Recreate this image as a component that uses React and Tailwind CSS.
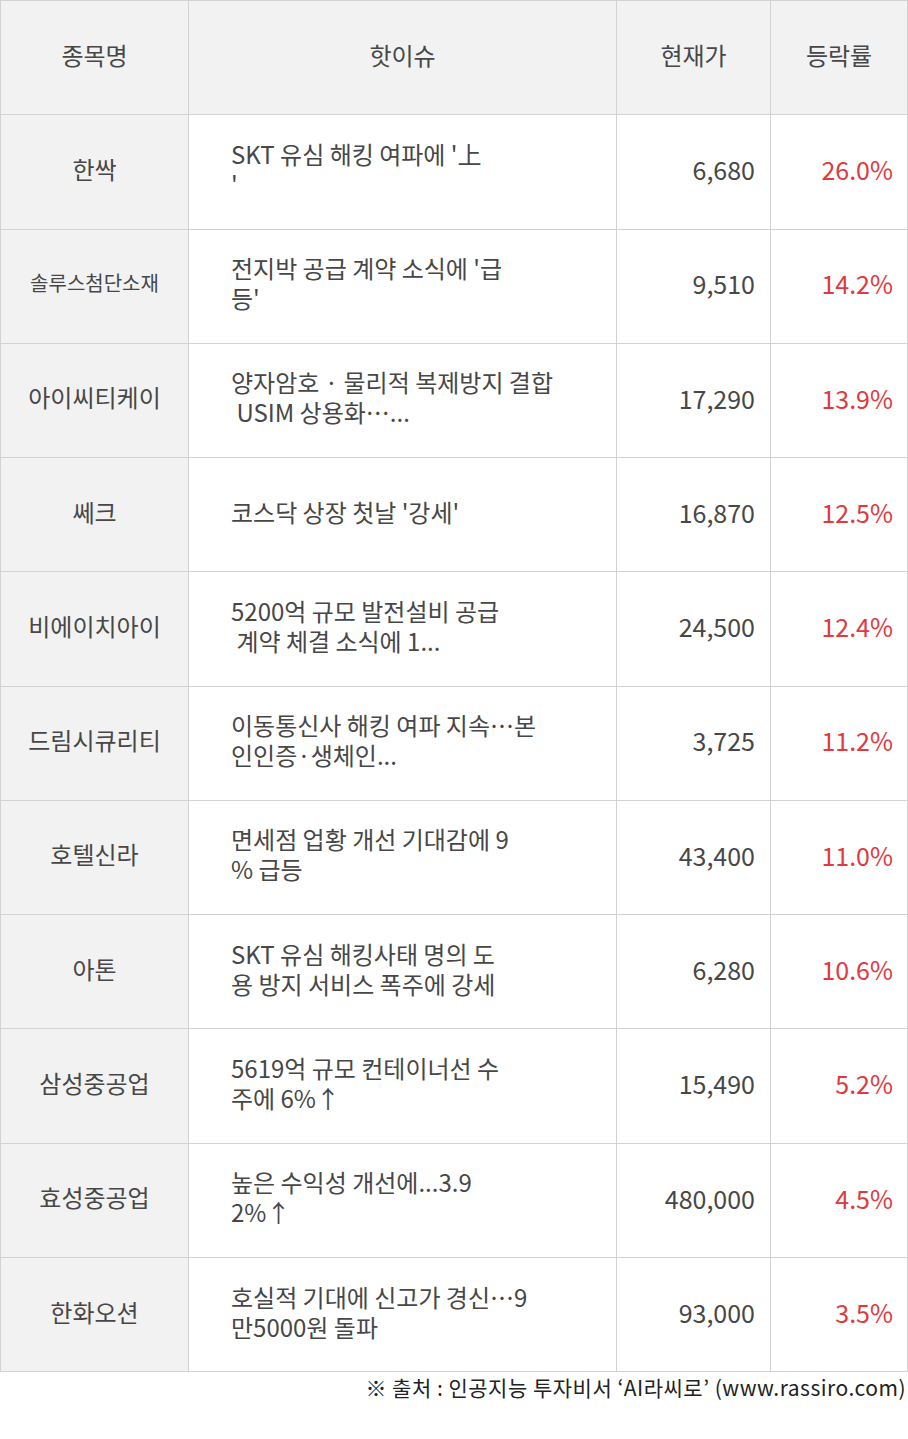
const rows = [
  { name: "한싹", issue: ["SKT 유심 해킹 여파에 '上", "'"], price: "6,680", rate: "26.0%" },
  { name: "솔루스첨단소재", small: true, issue: ["전지박 공급 계약 소식에 '급", "등'"], price: "9,510", rate: "14.2%" },
  { name: "아이씨티케이", issue: ["양자암호 · 물리적 복제방지 결합", " USIM 상용화⋯..."], price: "17,290", rate: "13.9%" },
  { name: "쎄크", issue: ["코스닥 상장 첫날 '강세'"], price: "16,870", rate: "12.5%" },
  { name: "비에이치아이", issue: ["5200억 규모 발전설비 공급", " 계약 체결 소식에 1..."], price: "24,500", rate: "12.4%" },
  { name: "드림시큐리티", issue: ["이동통신사 해킹 여파 지속⋯본", "인인증·생체인..."], price: "3,725", rate: "11.2%" },
  { name: "호텔신라", issue: ["면세점 업황 개선 기대감에 9", "% 급등"], price: "43,400", rate: "11.0%" },
  { name: "아톤", issue: ["SKT 유심 해킹사태 명의 도", "용 방지 서비스 폭주에 강세"], price: "6,280", rate: "10.6%" },
  { name: "삼성중공업", issue: ["5619억 규모 컨테이너선 수", "주에 6%↑"], price: "15,490", rate: "5.2%" },
  { name: "효성중공업", issue: ["높은 수익성 개선에...3.9", "2%↑"], price: "480,000", rate: "4.5%" },
  { name: "한화오션", issue: ["호실적 기대에 신고가 경신⋯9", "만5000원 돌파"], price: "93,000", rate: "3.5%" },
];

const font = { fontFamily: '"Noto Sans CJK KR", "Noto Sans", sans-serif' };

function Row({ children }) {
  return <div className="flex h-[114.27px] border-b border-[#d2d2d2]">{children}</div>;
}

export default function App() {
  return (
    <div className="w-[908px] bg-white text-[#474747]" style={font}>
      <div className="border-l border-t border-[#d2d2d2]">
        <Row>
          <div className="flex w-[188px] items-center justify-center border-r border-[#d2d2d2] bg-[#f2f2f2] pb-[6px] text-[24px]">종목명</div>
          <div className="flex w-[428px] items-center justify-center border-r border-[#d2d2d2] bg-[#f2f2f2] pb-[6px] text-[24px]">핫이슈</div>
          <div className="flex w-[154px] items-center justify-center border-r border-[#d2d2d2] bg-[#f2f2f2] pb-[6px] text-[24px]">현재가</div>
          <div className="flex w-[137px] items-center justify-center border-r border-[#d2d2d2] bg-[#f2f2f2] pb-[6px] text-[24px]">등락률</div>
        </Row>
        {rows.map((r) => (
          <Row key={r.name}>
            <div
              className={`flex w-[188px] items-center justify-center border-r border-[#d2d2d2] bg-[#f2f2f2] pb-[6px] ${
                r.small ? "text-[20px]" : "text-[24px]"
              }`}
            >
              {r.name}
            </div>
            <div className="flex w-[428px] flex-col justify-center border-r border-[#d2d2d2] pb-[6px] pl-[42px] text-[24px] leading-[30px]">
              {r.issue.map((line, i) => (
                <span key={i} className="whitespace-pre">
                  {line}
                </span>
              ))}
            </div>
            <div className="flex w-[154px] items-center justify-end border-r border-[#d2d2d2] pb-[4px] pr-[15px] text-[25px]">
              {r.price}
            </div>
            <div className="flex w-[137px] items-center justify-end border-r border-[#d2d2d2] pb-[4px] pr-[14px] text-[25px] text-[#e0393e]">
              {r.rate}
            </div>
          </Row>
        ))}
      </div>
      <div className="pr-[2px] pt-[1px] text-right text-[21px] leading-[28px] tracking-[0.5px] text-[#222]">
        ※ 출처 : 인공지능 투자비서 ‘AI라씨로’ (www.rassiro.com)
      </div>
    </div>
  );
}
